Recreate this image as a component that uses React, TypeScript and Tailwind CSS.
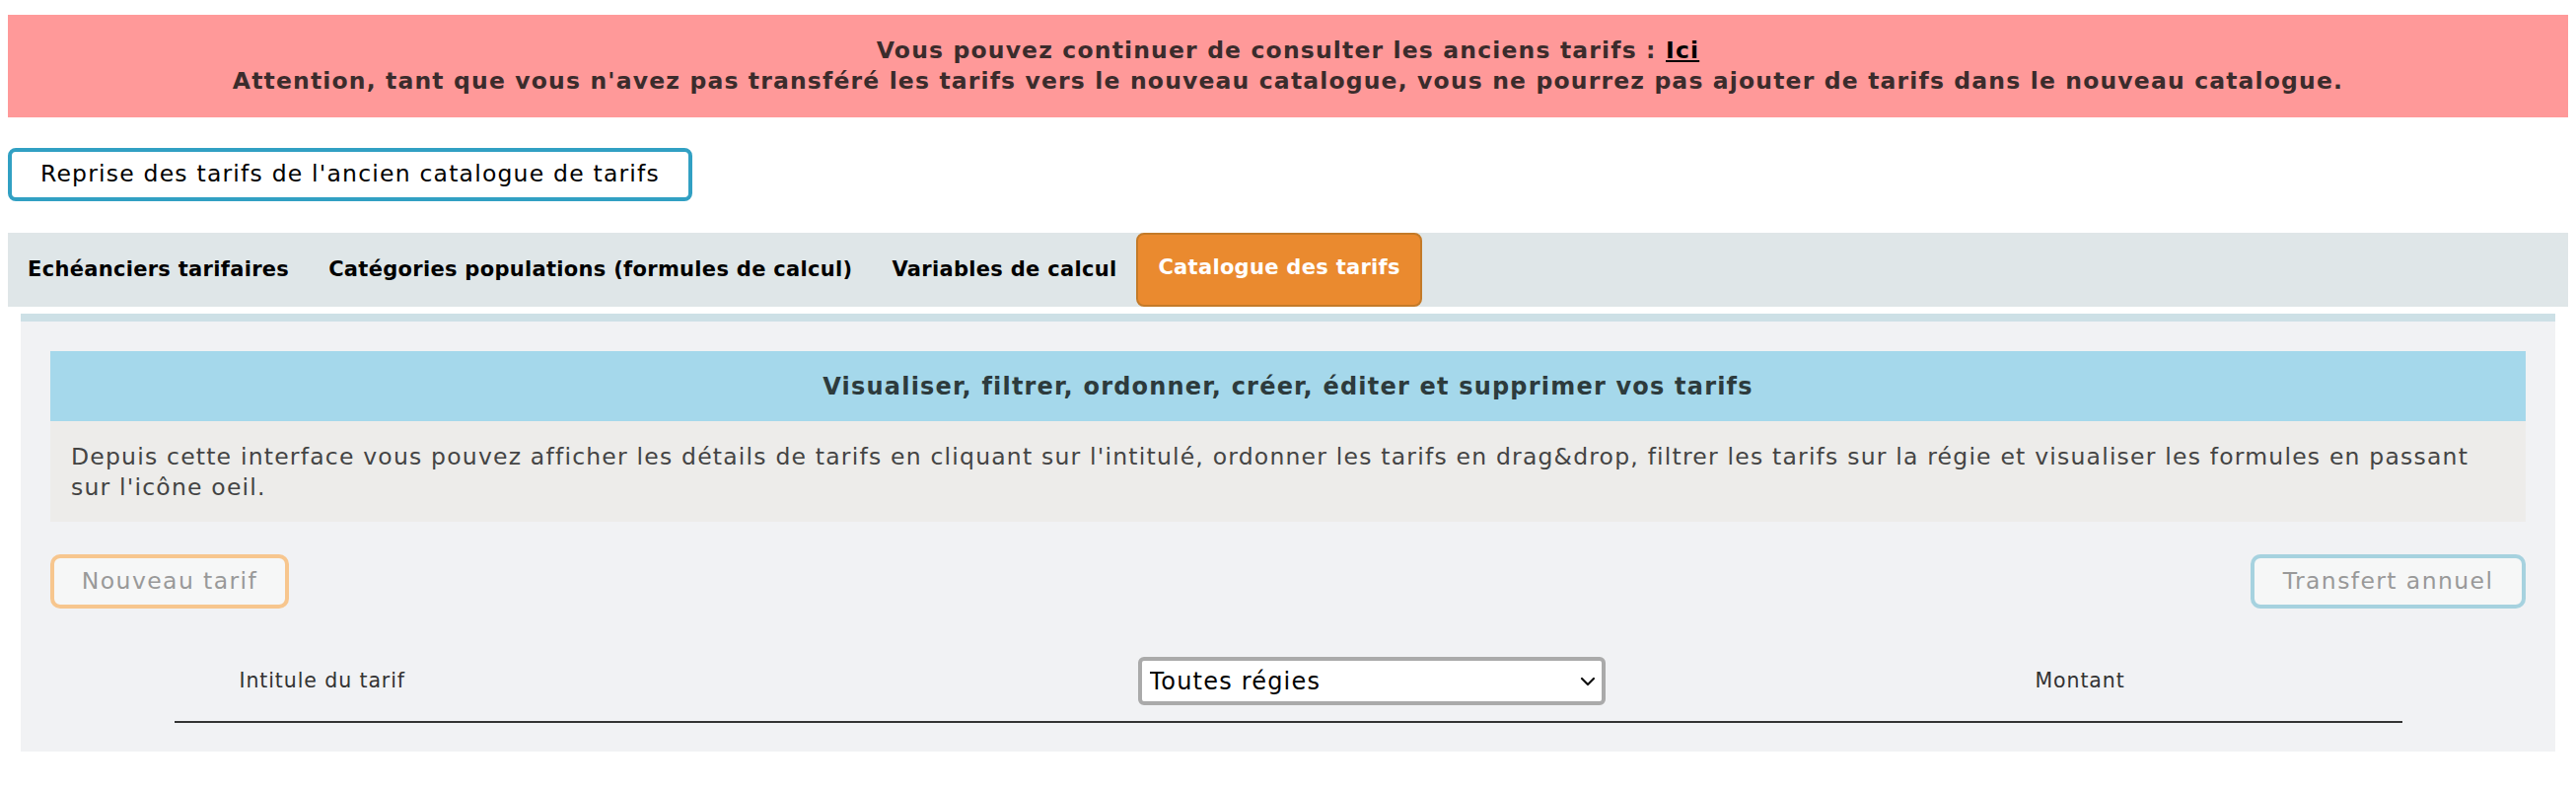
import React from 'react';

/**
 * Catalogue des tarifs - page de reprise
 */

const tabs = [
  { label: 'Echéanciers tarifaires', active: false },
  { label: 'Catégories populations (formules de calcul)', active: false },
  { label: 'Variables de calcul', active: false },
  { label: 'Catalogue des tarifs', active: true },
];

export default function App() {
  return (
    <div
      className="min-h-screen bg-white px-[8px] pt-[15px] text-[#222]"
      style={{ fontFamily: '"DejaVu Sans", Verdana, sans-serif' }}
    >
      {/* Bandeau d'avertissement */}
      <div className="bg-[#ff9999] py-[21px] text-center text-[23.5px] font-bold leading-[31px] tracking-[1.15px] text-[#3b2c2c]">
        <div>
          Vous pouvez continuer de consulter les anciens tarifs :{' '}
          <a href="#" className="text-black underline">Ici</a>
        </div>
        <div>
          Attention, tant que vous n'avez pas transféré les tarifs vers le nouveau catalogue, vous ne pourrez pas ajouter de tarifs dans le nouveau catalogue.
        </div>
      </div>

      {/* Bouton de reprise */}
      <button className="mt-[31px] flex h-[54px] w-[694px] items-center justify-center rounded-[8px] border-4 border-[#31a0c3] bg-white text-[23.5px] tracking-[1.2px] text-black">
        Reprise des tarifs de l'ancien catalogue de tarifs
      </button>

      {/* Onglets */}
      <div className="mt-[32px] flex h-[75px] items-stretch bg-[#dfe6e8]">
        {tabs.map((tab) =>
          tab.active ? (
            <div
              key={tab.label}
              className="flex items-center rounded-[8px] border-2 border-[#c47a28] bg-[#ea8a2f] px-[20px] pb-[3px] text-[21px] font-bold tracking-[0.3px] text-white"
            >
              {tab.label}
            </div>
          ) : (
            <div key={tab.label} className="flex items-center px-[20px] text-[21px] font-bold tracking-[0.3px] text-black">
              {tab.label}
            </div>
          )
        )}
      </div>

      {/* Panneau catalogue */}
      <div className="mx-[13px] mt-[7px] border-t-8 border-[#cde0e6] bg-[#f1f2f4] px-[30px] pb-[29px] pt-[30px]">
        <div className="flex h-[71px] items-center justify-center bg-[#a5d8eb] text-[24px] font-bold tracking-[1.2px] text-[#2d3b3d]">
          Visualiser, filtrer, ordonner, créer, éditer et supprimer vos tarifs
        </div>
        <div className="bg-[#edecea] px-[21px] pb-[19px] pt-[21px] text-[23.5px] leading-[31px] tracking-[1.2px] text-[#444]">
          Depuis cette interface vous pouvez afficher les détails de tarifs en cliquant sur l'intitulé, ordonner les tarifs en drag&amp;drop, filtrer les tarifs sur la régie et visualiser les formules en passant sur l'icône oeil.
        </div>

        {/* Actions */}
        <div className="mt-[33px] flex items-center justify-between">
          <button className="flex h-[55px] w-[242px] items-center justify-center rounded-[10px] border-4 border-[#f7c68e] bg-[#f6f7f7] text-[23.5px] tracking-[1.4px] text-[#999]">
            Nouveau tarif
          </button>
          <button className="flex h-[55px] w-[279px] items-center justify-center rounded-[10px] border-4 border-[#a6d2df] bg-[#f6f7f7] text-[23.5px] tracking-[1.4px] text-[#999]">
            Transfert annuel
          </button>
        </div>

        {/* En-tête du tableau */}
        <div className="mx-auto mt-[49px] w-[90%] border-b-2 border-[#333]">
          <div className="grid grid-cols-[977px_474px_1fr] items-center pb-[16px]">
            <div className="pl-[66px] text-[20.5px] tracking-[0.9px] text-[#333]">Intitule du tarif</div>
            <div className="relative">
              <select className="h-[49px] w-full appearance-none rounded-[6px] border-4 border-[#aaa] bg-white pl-[8px] text-[24px] tracking-[1.2px] text-black">
                <option>Toutes régies</option>
              </select>
              <svg
                className="pointer-events-none absolute right-[10px] top-1/2 -translate-y-1/2"
                width="16"
                height="10"
                viewBox="0 0 16 10"
                fill="none"
              >
                <path d="M2 2l6 6 6-6" stroke="#111" strokeWidth="2.2" strokeLinecap="round" strokeLinejoin="round" />
              </svg>
            </div>
            <div className="pl-[436px] text-[20.5px] tracking-[0.9px] text-[#333]">Montant</div>
          </div>
        </div>
      </div>
    </div>
  );
}
